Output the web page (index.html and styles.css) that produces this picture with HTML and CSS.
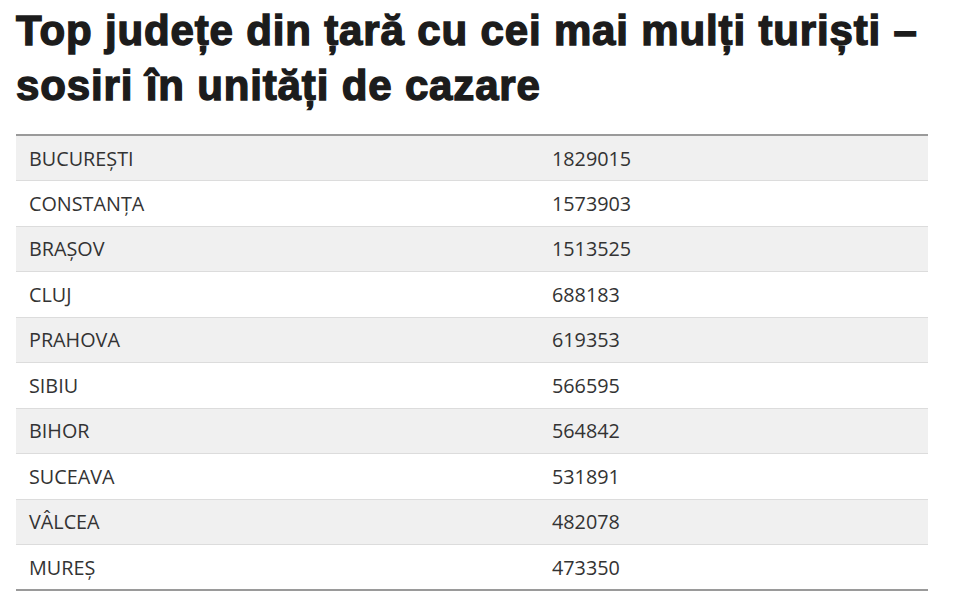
FILE: index.html
```html
<!DOCTYPE html>
<html lang="ro">
<head>
<meta charset="utf-8">
<link rel="stylesheet" href="styles.css">
</head>
<body>
<main class="article">
  <h2 class="title">Top județe din țară cu cei mai mulți turiști&nbsp;– sosiri în unități de cazare</h2>
  <table class="data">
    <tbody>
      <tr><td class="name">BUCUREȘTI</td><td class="val">1829015</td></tr>
      <tr><td class="name">CONSTANȚA</td><td class="val">1573903</td></tr>
      <tr><td class="name">BRAȘOV</td><td class="val">1513525</td></tr>
      <tr><td class="name">CLUJ</td><td class="val">688183</td></tr>
      <tr><td class="name">PRAHOVA</td><td class="val">619353</td></tr>
      <tr><td class="name">SIBIU</td><td class="val">566595</td></tr>
      <tr><td class="name">BIHOR</td><td class="val">564842</td></tr>
      <tr><td class="name">SUCEAVA</td><td class="val">531891</td></tr>
      <tr><td class="name">VÂLCEA</td><td class="val">482078</td></tr>
      <tr><td class="name">MUREȘ</td><td class="val">473350</td></tr>
    </tbody>
  </table>
</main>
</body>
</html>
```
FILE: styles.css
```css
html, body {
  margin: 0;
  padding: 0;
  background: #fff;
}
.article {
  width: 912px;
  padding: 0 16px;
}
.title {
  margin: 0;
  padding-top: 3px;
  font-family: "Liberation Sans", Arial, sans-serif;
  font-weight: 700;
  font-size: 42px;
  line-height: 55px;
  color: #1c1c1c;
  -webkit-text-stroke: 1.4px #1c1c1c;
  letter-spacing: 0.85px;
}
.data {
  margin-top: 21px;
  width: 912px;
  border-collapse: collapse;
  border-top: 2px solid #9a9a9a;
  border-bottom: 2px solid #9a9a9a;
  font-family: "Open Sans", sans-serif;
  font-size: 19.8px;
  color: #333;
}
.data tr {
  border-top: 1px solid #dcdcdc;
}
.data tr:first-child {
  border-top: none;
}
.data tr:nth-child(odd) {
  background: #f0f0f0;
}
.data td {
  height: 45.5px;
  padding: 0 13px;
  box-sizing: border-box;
}
.data td.name {
  width: 523px;
}
```
